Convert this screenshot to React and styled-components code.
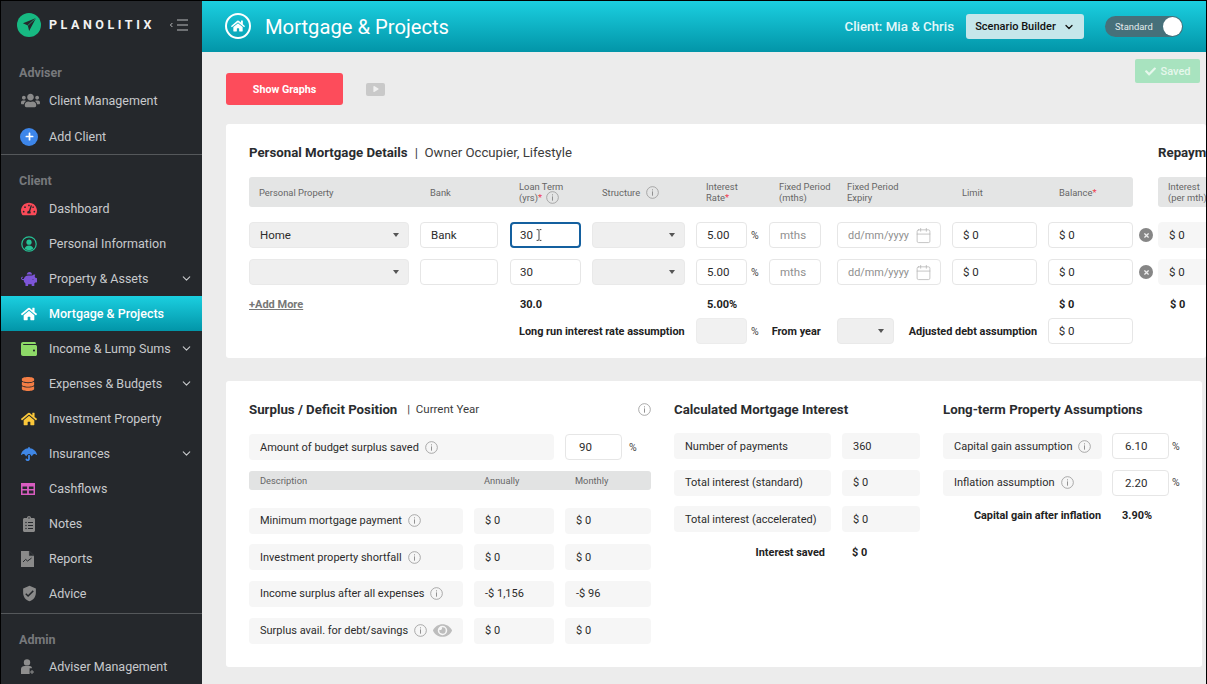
import React from 'react';
import styled, { createGlobalStyle } from 'styled-components';
import {
  FaUsers, FaPlus, FaTachometerAlt, FaPiggyBank, FaHome, FaWallet, FaDatabase,
  FaUmbrella, FaClipboardList, FaEye, FaCheck, FaPlay, FaTimes,
} from 'react-icons/fa';
import { MdVerifiedUser } from 'react-icons/md';
import { FiChevronDown, FiCalendar } from 'react-icons/fi';

const GlobalStyle = createGlobalStyle`
  html, body {
    margin: 0;
    padding: 0;
    height: 684px;
    overflow: hidden;
    background: #000;
    font-family: Roboto, "Liberation Sans", sans-serif;
  }
  * { box-sizing: border-box; }
`;

const Shell = styled.div`
  display: flex;
  width: 1207px;
  height: 684px;
  padding: 1px 1px 0 1px;
  overflow: hidden;
`;

/* sidebar */
const Sidebar = styled.aside`
  flex: 0 0 201px;
  background: #25282c;
  color: #c8cacc;
  display: flex;
  flex-direction: column;
`;

const Brand = styled.div`
  display: flex;
  align-items: center;
  height: 47px;
  padding: 0 0 0 16px;
`;

const LogoMark = styled.div`
  width: 24px;
  height: 24px;
  border-radius: 50%;
  background: #17b982;
  display: flex;
  align-items: center;
  justify-content: center;
`;

const BrandName = styled.div`
  margin-left: 8px;
  color: #f2f2f2;
  font-size: 12.5px;
  font-weight: 700;
  letter-spacing: 3.55px;
  width: 117px;
`;

const SectionLabel = styled.div`
  color: #77797c;
  font-size: 12.5px;
  font-weight: 700;
  padding-left: 18px;
  height: 16px;
  line-height: 16px;
  margin-top: ${p => p.$top}px;
  margin-bottom: ${p => p.$bottom}px;
`;

const NavItem = styled.div`
  display: flex;
  flex: none;
  align-items: center;
  height: 35px;
  padding-left: 18px;
  margin-top: ${p => p.$top || 0}px;
  font-size: 12.5px;
  color: ${p => (p.$active ? '#fff' : '#c8cacc')};
  font-weight: ${p => (p.$active ? 500 : 400)};
  background: ${p => (p.$active ? 'linear-gradient(#1bcfe0, #0295a8)' : 'transparent')};
`;

const NavIcon = styled.span`
  flex: 0 0 30px;
  display: flex;
  align-items: center;
  color: ${p => p.$color};
  font-size: ${p => p.$size || 16}px;
  padding-left: 2px;
`;

const NavText = styled.span`
  flex: 1;
`;

const NavChevron = styled.span`
  display: flex;
  margin-right: 9px;
  font-size: 13px;
  color: #c8cacc;
`;

const AddDot = styled.span`
  width: 18px;
  height: 18px;
  margin-left: -1px;
  border-radius: 50%;
  background: #3d86ea;
  color: #fff;
  font-size: 9px;
  display: flex;
  align-items: center;
  justify-content: center;
`;

const Divider = styled.div`
  flex: none;
  height: 1px;
  background: #55585b;
  margin-top: ${p => p.$top || 0}px;
`;

/* main column */
const Main = styled.main`
  flex: 1;
  min-width: 0;
  display: flex;
  flex-direction: column;
  background: #ececec;
`;

const Header = styled.header`
  height: 51px;
  flex: none;
  background: linear-gradient(#1bcfe0, #0295a8);
  display: flex;
  align-items: center;
  padding: 0 23px 0 23px;
  color: #fff;
`;

const HomeBadge = styled.div`
  width: 26px;
  height: 26px;
  border: 2px solid #fff;
  border-radius: 50%;
  display: flex;
  align-items: center;
  justify-content: center;
  font-size: 14px;
  margin-top: -1px;
`;

const PageTitle = styled.h1`
  margin: 0 0 0 14px;
  font-size: 20.2px;
  font-weight: 400;
  flex: 1;
`;

const ClientName = styled.div`
  font-size: 13.3px;
  font-weight: 500;
  margin-right: 12px;
  color: #e4f8fa;
`;

const ScenarioButton = styled.div`
  width: 118px;
  height: 25px;
  border-radius: 3px;
  background: #c5e6ea;
  color: #111;
  font-size: 11px;
  font-weight: 500;
  display: flex;
  align-items: center;
  justify-content: center;
  gap: 7px;

  svg {
    font-size: 12px;
    stroke-width: 2.6;
  }
`;

const Toggle = styled.div`
  width: 78px;
  height: 21px;
  margin-left: 21px;
  border-radius: 11px;
  background: #46707a;
  color: #e4eced;
  font-size: 9.4px;
  display: flex;
  align-items: center;
  justify-content: space-between;
  padding: 0 1px 0 10px;
`;

const Knob = styled.span`
  width: 19px;
  height: 19px;
  border-radius: 50%;
  background: #fff;
`;

const Toolbar = styled.div`
  height: 72px;
  flex: none;
  display: flex;
  align-items: flex-start;
  padding: 7px 6px 0 24px;
`;

const ToolbarLeft = styled.div`
  display: flex;
  align-items: center;
  gap: 23px;
  margin-top: 14px;
`;

const GraphsButton = styled.div`
  width: 117px;
  height: 32px;
  border-radius: 3px;
  background: #fd4c5b;
  color: #fff;
  font-size: 10.7px;
  font-weight: 700;
  display: flex;
  align-items: center;
  justify-content: center;
`;

const PlayButton = styled.div`
  width: 19px;
  height: 13px;
  border-radius: 2px;
  background: #c9c9c9;
  color: #f0f0f0;
  font-size: 6px;
  display: flex;
  align-items: center;
  justify-content: center;
`;

const SavedBadge = styled.div`
  margin-left: auto;
  width: 65px;
  height: 24px;
  border-radius: 2px;
  background: #a8e3bf;
  color: #e6f7ec;
  font-size: 11px;
  font-weight: 500;
  display: flex;
  align-items: center;
  justify-content: center;
  gap: 5px;

  svg {
    font-size: 11px;
  }
`;

const Card = styled.section`
  flex: none;
  margin: 0 ${p => p.$right || 0}px ${p => p.$bottom || 0}px 24px;
  height: ${p => p.$height}px;
  background: #fff;
  border-radius: 3px;
  overflow: hidden;
  padding-left: 23px;
`;

const TitleRow = styled.div`
  display: flex;
  align-items: center;
  white-space: nowrap;
  color: #222;
  height: 18px;
`;

const TitleLead = styled.div`
  flex: 0 0 ${p => p.$w}px;
  display: flex;
  align-items: center;
`;

const Title = styled.span`
  font-size: 13.25px;
  font-weight: 700;
  color: #2a2c2f;
`;

const TitleNote = styled.span`
  font-size: ${p => p.$size || 13.2}px;
  color: #3c3c3c;
  margin-left: ${p => p.$left || 7}px;
`;

/* mortgage table, shared tracks */
const TRACKS = '160px 79px 71px 93px 62px 57px 104px 85px 85px';

const HeadRow = styled.div`
  display: flex;
  gap: 25px;
  margin-top: 16px;
`;

const HeadBar = styled.div`
  flex: none;
  display: grid;
  grid-template-columns: ${p => p.$tracks};
  column-gap: 11px;
  align-items: center;
  width: ${p => p.$width}px;
  height: 30px;
  background: #e4e5e5;
  border-radius: 3px;
`;

const HeadCell = styled.div`
  padding-left: ${p => p.$pad || 10}px;
  font-size: 9.4px;
  line-height: 11px;
  color: #666;
  white-space: nowrap;
`;

const HeadLines = styled.div`
  display: flex;
  align-items: center;
  gap: 6px;
`;

const BelowInfo = styled.span`
  display: inline-flex;
  vertical-align: top;
  height: 11px;
  align-items: center;
  margin-left: 4px;
`;

const Req = styled.span`
  color: #ef3b4e;
`;

const GridRow = styled.div`
  display: grid;
  grid-template-columns: ${TRACKS} 3px 120px;
  column-gap: 11px;
  align-items: center;
  height: 26px;
  margin-top: ${p => p.$top}px;
`;

const Field = styled.div`
  height: ${p => p.$h || 26}px;
  width: ${p => (p.$w ? `${p.$w}px` : '100%')};
  flex: none;
  display: flex;
  align-items: center;
  padding-left: ${p => p.$pad || 10}px;
  border-radius: 4px;
  border: 1px solid #e6e6e6;
  background: #fff;
  font-size: 11.5px;
  color: ${p => (p.$muted ? '#8f8f8f' : '#2c2c2c')};
  white-space: nowrap;
`;

const FocusField = styled(Field)`
  border: 2px solid #14609f;
  padding-left: 8px;
  gap: 3px;
`;

const ReadField = styled(Field)`
  border-color: ${p => (p.$soft ? '#f6f6f6' : '#ececec')};
  background: ${p => (p.$soft ? '#f6f6f6' : '#f1f1f1')};
`;

const DateBox = styled(Field)`
  font-size: 10.9px;

  svg {
    margin-left: 6px;
    font-size: 17px;
    color: #b5b5b5;
    stroke-width: 1.1;
  }
`;

const SelectBox = styled.div`
  height: 26px;
  width: ${p => (p.$w ? `${p.$w}px` : '100%')};
  display: flex;
  align-items: center;
  justify-content: space-between;
  padding: 0 9px 0 10px;
  border-radius: 4px;
  border: 1px solid #e9e9e9;
  background: #efefef;
  font-size: 11.5px;
  color: #2c2c2c;
`;

const Caret = styled.span`
  width: 0;
  height: 0;
  margin-left: auto;
  border-left: 3.5px solid transparent;
  border-right: 3.5px solid transparent;
  border-top: 4px solid #555;
`;

const Inline = styled.div`
  display: flex;
  align-items: center;
  gap: ${p => p.$gap || 5}px;
`;

const Unit = styled.span`
  font-size: 10.5px;
  color: #444;
  margin-left: ${p => p.$left || 0}px;
`;

const RemoveDot = styled.span`
  flex: none;
  width: 14px;
  height: 14px;
  margin-left: -5px;
  border-radius: 50%;
  background: #868686;
  color: #eee;
  font-size: 7px;
  display: flex;
  align-items: center;
  justify-content: center;
`;

const TotalText = styled.div`
  font-size: 11px;
  font-weight: 700;
  color: #222;
  white-space: nowrap;
  padding-left: ${p => p.$pad || 0}px;
`;

const AddMore = styled.div`
  font-size: 11px;
  font-weight: 700;
  color: #777;
  text-decoration: underline;
`;

const AssumptionRow = styled.div`
  display: flex;
  align-items: center;
  height: 26px;
  margin-top: 1px;
`;

const BoldLabel = styled.div`
  font-size: 10.9px;
  font-weight: 700;
  color: #222;
  white-space: nowrap;
  flex: none;
  width: ${p => p.$w}px;
  margin-left: ${p => p.$left || 0}px;
  text-align: ${p => p.$align || 'left'};
`;

/* lower card */
const Columns = styled.div`
  display: flex;
  padding-top: 19px;
`;

const Column = styled.div`
  flex: none;
  width: ${p => p.$w}px;
  margin-right: ${p => p.$right || 0}px;
`;

const Stack = styled.div`
  display: flex;
  flex-direction: column;
  gap: ${p => p.$gap}px;
  margin-top: ${p => p.$top}px;
`;

const PairRow = styled.div`
  display: flex;
  gap: ${p => p.$gap || 11}px;
  align-items: center;
`;

const LabelCell = styled.div`
  flex: none;
  width: ${p => p.$w}px;
  height: 26px;
  display: flex;
  align-items: center;
  gap: 6px;
  padding-left: 11px;
  border-radius: 4px;
  background: #f6f6f6;
  font-size: 11px;
  color: #2c2c2c;
  white-space: nowrap;
`;

const SoftValue = styled(LabelCell)`
  gap: 0;
`;

const DescBar = styled.div`
  display: grid;
  grid-template-columns: 224px 91px 1fr;
  align-items: center;
  height: 19px;
  margin-top: 11px;
  padding-left: 11px;
  background: #e2e3e3;
  border-radius: 3px;
  font-size: 9.3px;
  color: #666;
`;

const SummaryRow = styled.div`
  display: flex;
  align-items: center;
  margin-top: ${p => p.$top}px;
`;

const Spread = styled.div`
  display: flex;
  align-items: center;
  justify-content: space-between;
`;

const EyeMark = styled.span`
  display: flex;
  color: #bdbdbd;
  font-size: 19px;
`;

const InfoIcon = ({ size = 13 }) => (
  <svg width={size} height={size} viewBox="0 0 14 14" fill="none" style={{ flex: 'none' }}>
    <circle cx="7" cy="7" r="6.3" stroke="#9a9a9a" strokeWidth="0.9" />
    <rect x="6.5" y="5.8" width="1" height="4.6" fill="#8a8a8a" />
    <rect x="6.5" y="3.6" width="1" height="1.1" fill="#8a8a8a" />
  </svg>
);

const LogoArrow = () => (
  <svg width="15" height="15" viewBox="0 0 16 16">
    <path d="M15 1 L1 6.6 L6.2 9 L7.6 15 Z" fill="#25282c" />
    <path d="M15 1 L6.2 9" stroke="#17b982" strokeWidth="0.8" />
  </svg>
);

const MenuIcon = () => (
  <svg width="20" height="12" viewBox="0 0 20 12" fill="none" stroke="#c8cacc" strokeWidth="0.9" style={{ marginLeft: 3 }}>
    <path d="M3.4 4 L1.4 6 L3.4 8" />
    <path d="M8 1h11M8 6h11M8 11h11" />
  </svg>
);

const PersonIcon = () => (
  <svg width="16" height="16" viewBox="0 0 16 16">
    <circle cx="8" cy="8" r="7.2" fill="none" stroke="#25c295" strokeWidth="1.2" />
    <circle cx="8" cy="6.2" r="2.6" fill="#25c295" />
    <path d="M3.6 12.6c.8-2.4 2.4-3.2 4.4-3.2s3.6.8 4.4 3.2c-1.2 1-2.7 1.6-4.4 1.6s-3.2-.6-4.4-1.6z" fill="#25c295" />
  </svg>
);

const GridIcon = () => (
  <svg width="14" height="12" viewBox="0 0 14 12">
    <path d="M0 0h14v12H0z" fill="#d95cc0" />
    <path d="M1.5 3.4h4.6v2.6H1.5zM7.9 3.4h4.6v2.6H7.9zM1.5 7.4h4.6v3H1.5zM7.9 7.4h4.6v3H7.9z" fill="#25282c" />
  </svg>
);

const ReportIcon = () => (
  <svg width="13" height="16" viewBox="0 0 13 16">
    <path d="M0 0h8.4L13 4.6V16H0z" fill="#8a8a8a" />
    <path d="M8.4 0v4.6H13" fill="#25282c" stroke="#25282c" strokeWidth="0.5" />
    <path d="M2 11l2.6-2.6 2 1.6L10.6 7" fill="none" stroke="#25282c" strokeWidth="1" />
  </svg>
);

const AdviserIcon = () => (
  <svg width="14" height="16" viewBox="0 0 14 16">
    <circle cx="6" cy="3.4" r="3.2" fill="#8e8e8e" />
    <path d="M0 15V10c0-2 1.8-3 3.6-3h4.8c1 0 1.8.4 2.4 1v1.2H8.6V15z" fill="#8e8e8e" />
    <path d="M11 11v4M9 13h4" stroke="#8e8e8e" strokeWidth="1" />
  </svg>
);

const CursorIcon = () => (
  <svg width="6" height="12" viewBox="0 0 6 12" fill="none" stroke="#333" strokeWidth="0.9">
    <path d="M0.6 0.6h1.6L3 1.4l.8-.8h1.6M3 1.4v9.2M0.6 11.4h1.6l.8-.8.8.8h1.6" />
  </svg>
);

const Chevron = () => (
  <NavChevron><FiChevronDown /></NavChevron>
);

const Nav = ({ icon, color, size, children, chevron, active }) => (
  <NavItem $active={active}>
    <NavIcon $color={color} $size={size}>{icon}</NavIcon>
    <NavText>{children}</NavText>
    {chevron && <Chevron />}
  </NavItem>
);

const MortgageRow = ({ property, bank, term, top }) => (
  <GridRow $top={top}>
    <SelectBox>{property}<Caret /></SelectBox>
    <Field $w={78}>{bank}</Field>
    {term}
    <SelectBox><Caret /></SelectBox>
    <Inline $gap={4}>
      <Field $w={51}>5.00</Field>
      <Unit>%</Unit>
    </Inline>
    <Field $w={52} $muted>mths</Field>
    <DateBox $muted>dd/mm/yyyy<FiCalendar /></DateBox>
    <Field>$ 0</Field>
    <Field>$ 0</Field>
    <RemoveDot><FaTimes /></RemoveDot>
    <ReadField $soft>$ 0</ReadField>
  </GridRow>
);

const surplusRows = [
  ['Minimum mortgage payment', '$ 0', '$ 0'],
  ['Investment property shortfall', '$ 0', '$ 0'],
  ['Income surplus after all expenses', '-$ 1,156', '-$ 96'],
  ['Surplus avail. for debt/savings', '$ 0', '$ 0', true],
];

const interestRows = [
  ['Number of payments', '360'],
  ['Total interest (standard)', '$ 0'],
  ['Total interest (accelerated)', '$ 0'],
];

const assumptionRows = [
  ['Capital gain assumption', '6.10'],
  ['Inflation assumption', '2.20'],
];

export default function App() {
  return (
    <>
      <GlobalStyle />
      <Shell>
        <Sidebar>
          <Brand>
            <LogoMark><LogoArrow /></LogoMark>
            <BrandName>PLANOLITIX</BrandName>
            <MenuIcon />
          </Brand>
          <SectionLabel $top={17} $bottom={2}>Adviser</SectionLabel>
          <Nav icon={<FaUsers />} color="#8a8a8a" size={19}>Client Management</Nav>
          <NavItem $top={1}>
            <NavIcon><AddDot><FaPlus /></AddDot></NavIcon>
            <NavText>Add Client</NavText>
          </NavItem>
          <Divider />
          <SectionLabel $top={18} $bottom={2}>Client</SectionLabel>
          <Nav icon={<FaTachometerAlt />} color="#fb4a58">Dashboard</Nav>
          <Nav icon={<PersonIcon />}>Personal Information</Nav>
          <Nav icon={<FaPiggyBank />} color="#7d55d8" chevron>Property &amp; Assets</Nav>
          <Nav icon={<FaHome />} color="#fff" active>Mortgage &amp; Projects</Nav>
          <Nav icon={<FaWallet />} color="#8ed968" chevron>Income &amp; Lump Sums</Nav>
          <Nav icon={<FaDatabase />} color="#f47e45" size={14} chevron>Expenses &amp; Budgets</Nav>
          <Nav icon={<FaHome />} color="#fbc73a">Investment Property</Nav>
          <Nav icon={<FaUmbrella />} color="#3f87e6" chevron>Insurances</Nav>
          <Nav icon={<GridIcon />}>Cashflows</Nav>
          <Nav icon={<FaClipboardList />} color="#8a8a8a">Notes</Nav>
          <Nav icon={<ReportIcon />}>Reports</Nav>
          <Nav icon={<MdVerifiedUser />} color="#8a8a8a" size={17}>Advice</Nav>
          <Divider $top={2} />
          <SectionLabel $top={18} $bottom={1}>Admin</SectionLabel>
          <Nav icon={<AdviserIcon />}>Adviser Management</Nav>
        </Sidebar>

        <Main>
          <Header>
            <HomeBadge><FaHome /></HomeBadge>
            <PageTitle>Mortgage &amp; Projects</PageTitle>
            <ClientName>Client: Mia &amp; Chris</ClientName>
            <ScenarioButton>Scenario Builder <FiChevronDown /></ScenarioButton>
            <Toggle>Standard<Knob /></Toggle>
          </Header>

          <Toolbar>
            <ToolbarLeft>
              <GraphsButton>Show Graphs</GraphsButton>
              <PlayButton><FaPlay /></PlayButton>
            </ToolbarLeft>
            <SavedBadge><FaCheck />Saved</SavedBadge>
          </Toolbar>

          <Card $height={234} $bottom={23}>
            <Columns>
              <TitleRow>
                <TitleLead $w={909}>
                  <Title>Personal Mortgage Details</Title>
                  <TitleNote>|&nbsp; Owner Occupier, Lifestyle</TitleNote>
                </TitleLead>
                <Title>Repayments</Title>
              </TitleRow>
            </Columns>
            <HeadRow>
              <HeadBar $tracks={TRACKS} $width={884}>
                <HeadCell>Personal Property</HeadCell>
                <HeadCell>Bank</HeadCell>
                <HeadCell $pad={9}>
                  Loan Term<br />(yrs)<Req>*</Req>
                  <BelowInfo><InfoIcon /></BelowInfo>
                </HeadCell>
                <HeadCell>
                  <HeadLines>Structure <InfoIcon /></HeadLines>
                </HeadCell>
                <HeadCell>Interest<br />Rate<Req>*</Req></HeadCell>
                <HeadCell>Fixed Period<br />(mths)</HeadCell>
                <HeadCell>Fixed Period<br />Expiry</HeadCell>
                <HeadCell>Limit</HeadCell>
                <HeadCell $pad={11}>Balance<Req>*</Req></HeadCell>
              </HeadBar>
              <HeadBar $tracks="1fr" $width={120}>
                <HeadCell>Interest<br />(per mth)</HeadCell>
              </HeadBar>
            </HeadRow>

            <MortgageRow
              top={15}
              property="Home"
              bank="Bank"
              term={<FocusField>30 <CursorIcon /></FocusField>}
            />
            <MortgageRow top={11} term={<Field $pad={9}>30</Field>} />

            <GridRow $top={6}>
              <AddMore>+Add More</AddMore>
              <span />
              <TotalText $pad={10}>30.0</TotalText>
              <span />
              <TotalText $pad={11}>5.00%</TotalText>
              <span />
              <span />
              <span />
              <TotalText $pad={11}>$ 0</TotalText>
              <span />
              <TotalText $pad={12}>$ 0</TotalText>
            </GridRow>

            <AssumptionRow>
              <BoldLabel $w={177} $left={270}>Long run interest rate assumption</BoldLabel>
              <ReadField $w={51} />
              <Unit $left={4}>%</Unit>
              <BoldLabel $w={65} $left={13}>From year</BoldLabel>
              <SelectBox $w={57}><Caret /></SelectBox>
              <BoldLabel $w={139} $left={15}>Adjusted debt assumption</BoldLabel>
              <Field $w={85}>$ 0</Field>
            </AssumptionRow>
          </Card>

          <Card $height={286} $right={4}>
            <Columns>
              <Column $w={402} $right={23}>
                <Spread>
                  <TitleRow>
                    <Title>Surplus / Deficit Position</Title>
                    <TitleNote $size={11.5} $left={10}>|&nbsp; Current Year</TitleNote>
                  </TitleRow>
                  <InfoIcon />
                </Spread>
                <Stack $gap={0} $top={16}>
                  <PairRow>
                    <LabelCell $w={305}>Amount of budget surplus saved <InfoIcon /></LabelCell>
                    <Field $w={57} $pad={13}>90</Field>
                    <Unit $left={-4}>%</Unit>
                  </PairRow>
                </Stack>
                <DescBar>
                  <span>Description</span>
                  <span>Annually</span>
                  <span>Monthly</span>
                </DescBar>
                <Stack $gap={10.7} $top={17.5}>
                  {surplusRows.map(([label, annual, monthly, eye]) => (
                    <PairRow key={label}>
                      <LabelCell $w={214}>
                        {label} <InfoIcon />
                        {eye && <EyeMark><FaEye /></EyeMark>}
                      </LabelCell>
                      <SoftValue $w={80}>{annual}</SoftValue>
                      <SoftValue $w={86}>{monthly}</SoftValue>
                    </PairRow>
                  ))}
                </Stack>
              </Column>

              <Column $w={246} $right={23}>
                <TitleRow><Title>Calculated Mortgage Interest</Title></TitleRow>
                <Stack $gap={10.5} $top={15}>
                  {interestRows.map(([label, value]) => (
                    <PairRow key={label}>
                      <LabelCell $w={157}>{label}</LabelCell>
                      <SoftValue $w={78}>{value}</SoftValue>
                    </PairRow>
                  ))}
                </Stack>
                <SummaryRow $top={14}>
                  <BoldLabel $w={151} $align="right">Interest saved</BoldLabel>
                  <BoldLabel $w={40} $left={27}>$ 0</BoldLabel>
                </SummaryRow>
              </Column>

              <Column $w={240}>
                <TitleRow><Title>Long-term Property Assumptions</Title></TitleRow>
                <Stack $gap={10.5} $top={15}>
                  {assumptionRows.map(([label, value]) => (
                    <PairRow key={label} $gap={10}>
                      <LabelCell $w={159}>{label} <InfoIcon /></LabelCell>
                      <Field $w={57} $pad={12}>{value}</Field>
                      <Unit $left={-7}>%</Unit>
                    </PairRow>
                  ))}
                </Stack>
                <SummaryRow $top={13}>
                  <BoldLabel $w={158} $align="right">Capital gain after inflation</BoldLabel>
                  <BoldLabel $w={50} $left={21}>3.90%</BoldLabel>
                </SummaryRow>
              </Column>
            </Columns>
          </Card>
        </Main>
      </Shell>
    </>
  );
}
